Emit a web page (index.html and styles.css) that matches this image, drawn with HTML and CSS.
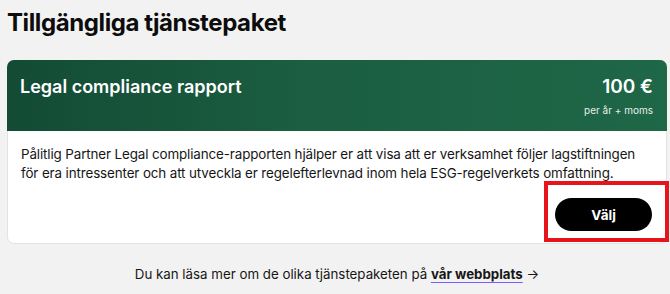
FILE: index.html
```html
<!DOCTYPE html>
<html lang="sv">
<head>
<meta charset="utf-8">
<link rel="stylesheet" href="styles.css">
</head>
<body>
<main class="page">
  <h1 class="page-title">Tillgängliga tjänstepaket</h1>
  <section class="card">
    <header class="card-head">
      <h2 class="card-title">Legal compliance rapport</h2>
      <div class="price">
        <div class="price-amount">100 €</div>
        <div class="price-note">per år + moms</div>
      </div>
    </header>
    <div class="card-body">
      <p class="card-text">Pålitlig Partner Legal compliance-rapporten hjälper er att visa att er verksamhet följer lagstiftningen för era intressenter och att utveckla er regelefterlevnad inom hela ESG-regelverkets omfattning.</p>
      <div class="actions">
        <div class="highlight">
          <button class="btn">Välj</button>
        </div>
      </div>
    </div>
  </section>
  <p class="more">Du kan läsa mer om de olika tjänstepaketen på <a class="more-link" href="#">vår webbplats</a> <span class="arrow">→</span></p>
</main>
</body>
</html>
```
FILE: styles.css
```css
* { box-sizing: border-box; }
html, body { margin: 0; padding: 0; }
body {
  background: #f2f2f2;
  font-family: Inter, "Noto Sans", sans-serif;
  color: #111;
  width: 670px;
  height: 294px;
  overflow: hidden;
}
.page {
  padding: 0 3px 0 7px;
}
.page-title {
  margin: 0;
  padding-top: 7px;
  font-size: 24px;
  line-height: 32px;
  font-weight: 700;
  letter-spacing: -0.4px;
  color: #0c0c0c;
}
.card {
  margin-top: 21px;
  background: #fff;
  border: 1px solid #e3e3e3;
  border-radius: 7px;
}
.card-head {
  display: flex;
  justify-content: space-between;
  align-items: flex-start;
  height: 71px;
  margin: -1px -1px 0 -1px;
  padding: 14px 14px 0 13px;
  border-radius: 7px 7px 0 0;
  background: linear-gradient(90deg, #134b35 0%, #1b5e41 45%, #1e6747 100%);
  color: #fff;
}
.card-title {
  margin: 0;
  font-size: 18px;
  line-height: 26px;
  font-weight: 600;
}
.price { text-align: right; }
.price-amount {
  font-size: 19px;
  line-height: 26px;
  font-weight: 600;
}
.price-note {
  margin-top: 3px;
  font-size: 10px;
  line-height: 14px;
  color: #e6efe9;
}
.card-body {
  padding: 14px 6px 12px 13px;
}
.card-text {
  margin: 0;
  padding-right: 20px;
  font-size: 13.4px;
  line-height: 19px;
  letter-spacing: -0.12px;
  color: #161616;
}
.actions {
  display: flex;
  justify-content: flex-end;
  margin-top: 15px;
  padding-right: 8px;
}
.btn {
  display: block;
  width: 97px;
  height: 33px;
  border: 0;
  border-radius: 17px;
  background: #000;
  color: #fff;
  font-family: Inter, "Noto Sans", sans-serif;
  font-size: 13.5px;
  font-weight: 700;
}
.highlight {
  position: relative;
}
.highlight::after {
  content: "";
  position: absolute;
  left: -11px;
  top: -17px;
  right: -17px;
  bottom: -11px;
  border: 4px solid #e8141c;
}
.more {
  margin: 20px 0 0 0;
  text-align: center;
  font-size: 13.3px;
  line-height: 20px;
  color: #161616;
}
.more-link {
  color: #161616;
  font-weight: 700;
  text-decoration: underline;
  text-decoration-color: #7a5cff;
  text-underline-offset: 3px;
}
.arrow { font-size: 13.3px; }
```
